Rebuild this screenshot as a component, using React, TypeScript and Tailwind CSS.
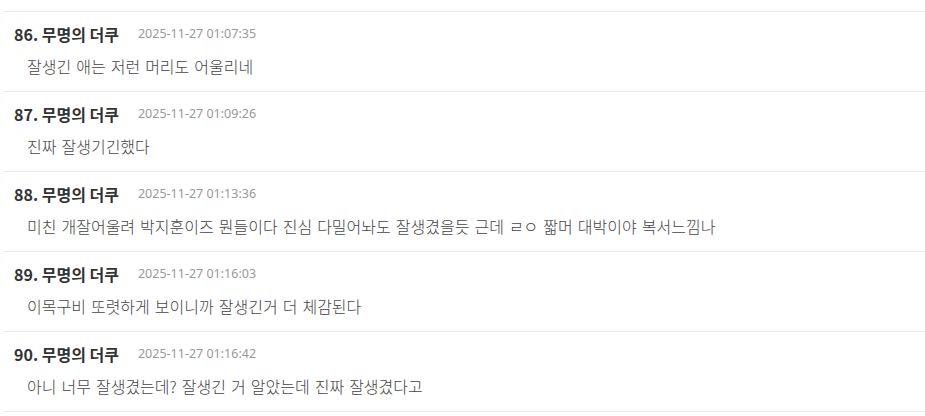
import React from "react";

const items = [
  { n: 86, t: "2025-11-27 01:07:35", c: "잘생긴 애는 저런 머리도 어울리네" },
  { n: 87, t: "2025-11-27 01:09:26", c: "진짜 잘생기긴했다" },
  { n: 88, t: "2025-11-27 01:13:36", c: "미친 개잘어울려 박지훈이즈 뭔들이다 진심 다밀어놔도 잘생겼을듯 근데 ㄹㅇ 짧머 대박이야 복서느낌나" },
  { n: 89, t: "2025-11-27 01:16:03", c: "이목구비 또렷하게 보이니까 잘생긴거 더 체감된다" },
  { n: 90, t: "2025-11-27 01:16:42", c: "아니 너무 잘생겼는데? 잘생긴 거 알았는데 진짜 잘생겼다고" },
];

export default function App() {
  return (
    <div className="w-[925px] h-[416px] bg-white overflow-hidden pt-[11px] pl-[3px]" style={{ fontFamily: '"Noto Sans", "Noto Sans CJK KR", sans-serif' }}>
      <ul className="border-b border-[#ececec]">
        {items.map((it) => (
          <li key={it.n} className="border-t border-[#ececec] h-[80px] pl-[11px] pt-[11px]">
            <div className="flex items-center h-[22px]">
              <span className="text-[16px] font-bold text-[#333]" style={{ fontFamily: '"Noto Sans CJK KR", sans-serif' }}>{it.n}. 무명의 더쿠</span>
              <span className="ml-[19px] text-[12.5px] text-[#999]">{it.t}</span>
            </div>
            <div className="mt-[10px] h-[22px] flex items-center pl-[13px] text-[16px] text-[#444] font-light [word-spacing:1.5px]" style={{ fontFamily: '"Noto Sans CJK KR", sans-serif' }}>
              {it.c}
            </div>
          </li>
        ))}
      </ul>
    </div>
  );
}
